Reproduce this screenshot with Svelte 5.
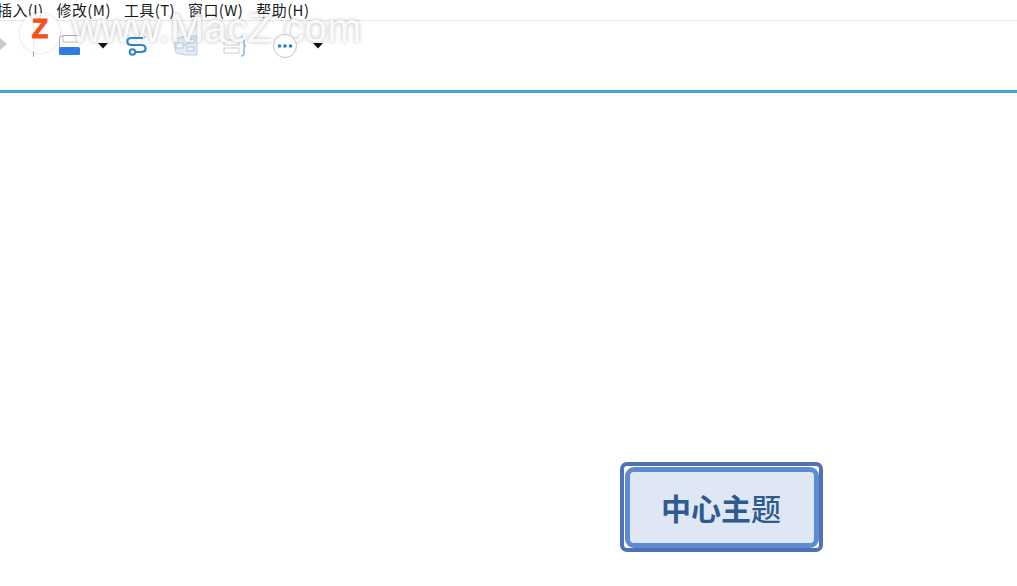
<script>
  const menus = ['插入(I)', '修改(M)', '工具(T)', '窗口(W)', '帮助(H)'];
</script>

<div class="page">
  <div class="menubar">
    {#each menus as item}
      <span class="menu-item">{item}</span>
    {/each}
  </div>

  <div class="toolbar">
    <svg class="tri-left" width="8" height="14" viewBox="0 0 8 14"><path d="M0 1 L7 7 L0 13 Z" fill="#c9c9c9" /></svg>
    <span class="divider"></span>

    <svg class="ic-topic" width="24" height="22" viewBox="0 0 24 22">
      <path d="M21 1.500H6Q2.500 1.500 2.500 5V14Q2.500 15.500 4 15.500" fill="none" stroke="#a8a8a8" />
      <path d="M6 1.500V8H21" fill="none" stroke="#bdbdbd" />
      <rect x="2" y="13" width="21" height="8" rx="1.500" fill="#2b7de0" />
    </svg>
    <svg class="caret" width="10" height="6" viewBox="0 0 10 6"><path d="M0 0H10L5 5.500Z" fill="#111" /></svg>

    <svg class="ic-link" width="24" height="22" viewBox="0 0 24 22">
      <path d="M18 3H6.500C1 3 1 10 6.500 10H16C22 10 22 17 16 17H10" fill="none" stroke="#2b86c5" stroke-width="2.200" />
      <circle cx="7.500" cy="17" r="2.800" fill="#fff" stroke="#2b86c5" stroke-width="2" />
      <circle cx="20" cy="2" r="1" fill="#9cc8e8" />
    </svg>

    <svg class="ic-boundary" width="26" height="22" viewBox="0 0 26 22">
      <path d="M1 4Q12 0 24 1V20Q12 21 3 18Q1 10 1 4Z" fill="#e3ecf6" stroke="#bcd0e6" />
      <rect x="3" y="8" width="7" height="5" fill="#f2f6fb" stroke="#b5c7db" />
      <rect x="14" y="4" width="7" height="4" fill="#f2f6fb" stroke="#b5c7db" />
      <rect x="14" y="12" width="7" height="4" fill="#f2f6fb" stroke="#b5c7db" />
      <path d="M10 10H14" stroke="#b5c7db" />
    </svg>

    <svg class="ic-summary" width="24" height="24" viewBox="0 0 24 24">
      <rect x="1" y="6" width="15" height="5" fill="#fff" stroke="#cfcfcf" />
      <rect x="1" y="14" width="15" height="5" fill="#fff" stroke="#cfcfcf" />
      <path d="M18 3Q21 3 21 6V10Q21 12 23 12Q21 12 21 14V19Q21 22 18 22" fill="none" stroke="#8fb8de" stroke-width="1.600" />
    </svg>

    <svg class="ic-more" width="26" height="26" viewBox="0 0 26 26">
      <circle cx="13" cy="13" r="11.500" fill="#fff" stroke="#c4c4c4" />
      <circle cx="7.500" cy="13" r="1.800" fill="#2e7cc0" />
      <circle cx="13" cy="13" r="1.800" fill="#2e7cc0" />
      <circle cx="18.500" cy="13" r="1.800" fill="#2e7cc0" />
    </svg>
    <svg class="caret caret-last" width="10" height="6" viewBox="0 0 10 6"><path d="M0 0H10L5 5.500Z" fill="#111" /></svg>
  </div>

  <div class="canvas">
    <div class="topic">
      <div class="topic-inner">中心主<span class="thin">题</span></div>
    </div>
  </div>

  <!-- watermark lies over the toolbar -->
  <div class="watermark">
    <div class="wm-logo"><span class="wm-z">Z</span></div>
    <span class="wm-text">www.MacZ.com</span>
  </div>
</div>

<style>
  :global(body) {
    background: #fff;
    overflow: hidden;
  }

  .page {
    position: relative;
    width: 1017px;
    height: 586px;
    overflow: hidden;
    display: flex;
    flex-direction: column;
    font-family: "Noto Sans CJK SC", "Liberation Sans", sans-serif;
  }

  .menubar {
    height: 20px;
    display: flex;
    align-items: flex-start;
    gap: 13px;
    border-bottom: 1px solid #e6e6e6;
    font-size: 15px;
    letter-spacing: 0.4px;
    color: #1c1c1c;
    white-space: nowrap;
    margin-left: -3px;
  }

  .menu-item {
    line-height: 20px;
  }

  .toolbar {
    height: 69px;
    display: flex;
    align-items: flex-start;
    border-bottom: 3px solid #4aa5cc;
  }

  .tri-left { margin-top: 16px; }

  .divider {
    width: 1px;
    height: 36px;
    margin: 0 0 0 25px;
    background: #a9a9a9;
  }

  /* these stay readable through the watermark, as in the reference */
  .caret, .ic-link, .ic-more {
    position: relative;
    z-index: 1;
  }

  .ic-topic { margin: 13px 0 0 23px; position: relative; z-index: 1; }
  .caret { margin-top: 22px; margin-left: 17px; }
  .ic-link { margin: 14px 0 0 17px; }
  .ic-boundary { margin: 14px 0 0 24px; }
  .ic-summary { margin: 13px 0 0 24px; }
  .ic-more { margin: 12px 0 0 25px; }
  .caret-last { margin-left: 15px; }

  .canvas {
    flex: 1;
    position: relative;
  }

  .topic {
    position: absolute;
    left: 620px;
    top: 369px;
    width: 203px;
    height: 90px;
    box-sizing: border-box;
    border: 4px solid #4f71b8;
    border-radius: 7px;
    padding: 1px 0 0 1px;
    background: #fff;
  }

  .topic-inner {
    height: 100%;
    width: 194px;
    box-sizing: border-box;
    border: 5px solid #5c8bd0;
    border-radius: 9px;
    background: #dfe7f4;
    display: flex;
    align-items: center;
    justify-content: center;
    padding-right: 2px;
    padding-bottom: 2px;
    font-size: 30px;
    font-weight: 700;
    color: #2f5a8f;
  }

  .thin {
    font-weight: 500;
  }

  .watermark {
    position: absolute;
    left: 20px;
    top: 21px;
    height: 24px;
    display: flex;
    align-items: center;
    gap: 12px;
    pointer-events: none;
  }

  .wm-logo {
    width: 40px;
    height: 40px;
    flex: none;
    border-radius: 50%;
    background: rgba(255, 255, 255, 0.8);
    box-shadow: 0 0 3px rgba(0, 0, 0, 0.18);
    display: flex;
    align-items: center;
    justify-content: center;
  }

  .wm-z {
    font-family: "Liberation Sans", sans-serif;
    font-weight: 700;
    font-size: 27px;
    line-height: 24px;
    color: #f4511e;
    -webkit-text-stroke: 1px #f4511e;
    margin-top: -8px;
  }

  .wm-text {
    font-family: "Liberation Sans", sans-serif;
    font-size: 41px;
    line-height: 24px;
    margin-bottom: 10px;
    color: rgba(255, 255, 255, 0.9);
    text-shadow: 0 0 4px rgba(0, 0, 0, 0.28);
    white-space: nowrap;
  }
</style>
